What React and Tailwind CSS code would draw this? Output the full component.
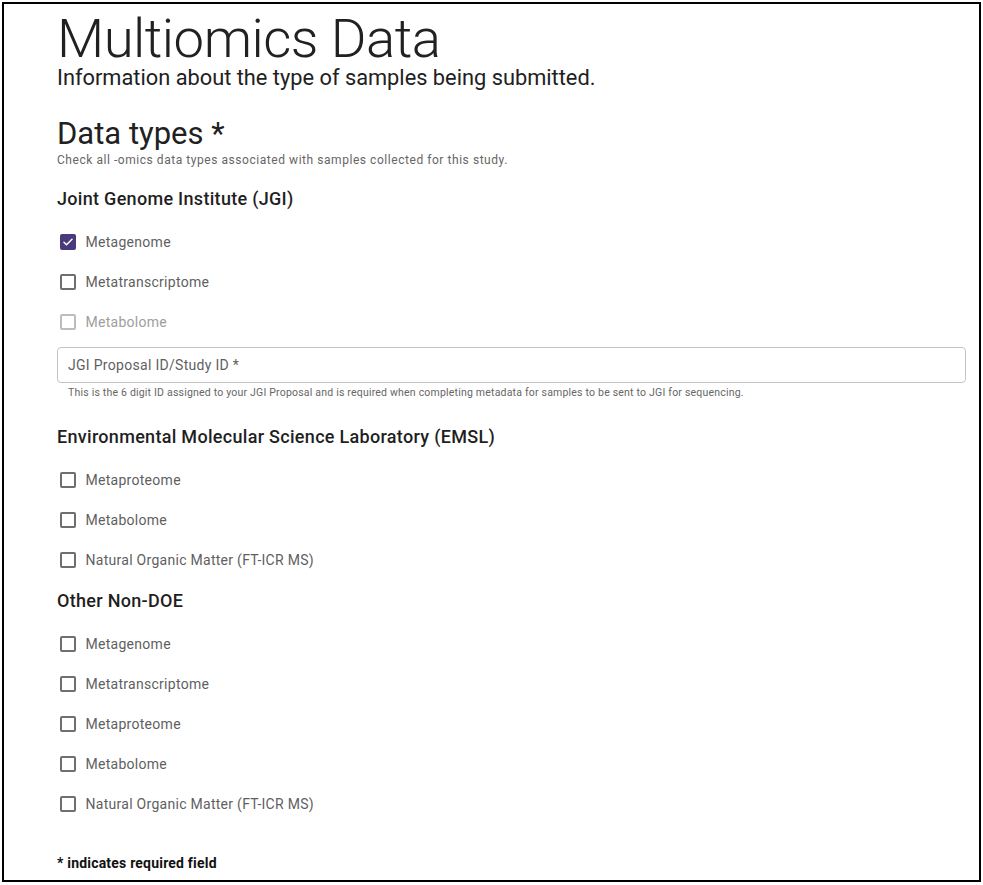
import React from "react";

function Box({ state }) {
  if (state === "checked") {
    return (
      <span className="flex h-[16px] w-[16px] items-center justify-center rounded-[2px] bg-[#4a3a7c]">
        <svg width="12" height="12" viewBox="0 0 24 24" fill="none">
          <path d="M4 12.5l5 5L20 6.5" stroke="white" strokeWidth="3" strokeLinecap="round" strokeLinejoin="round" />
        </svg>
      </span>
    );
  }
  if (state === "disabled") {
    return <span className="block h-[16px] w-[16px] rounded-[2px] border-2 border-[#bdbdbd]" />;
  }
  return <span className="block h-[16px] w-[16px] rounded-[2px] border-2 border-[#6f6f6f]" />;
}

function Row({ label, state }) {
  return (
    <div className="flex h-[40px] items-center pl-[2.5px]">
      <Box state={state} />
      <span
        className={
          "ml-[10px] text-[14px] tracking-[0.28px] " +
          (state === "disabled" ? "text-[#9e9e9e]" : "text-[#5f5f5f]")
        }
      >
        {label}
      </span>
    </div>
  );
}

function Heading({ children, className }) {
  return (
    <div className={"text-[18px] font-medium leading-[24px] text-[#1f1f1f] tracking-[0.3px] " + className}>
      {children}
    </div>
  );
}

export default function App() {
  return (
    <div className="m-[2px] h-[880px] w-[979px] border-2 border-black bg-white pl-[53px] pr-[13px] font-['Roboto',sans-serif]">
      <h1 className="mt-[7px] text-[54.5px] font-light leading-[54px] tracking-[-0.5px] text-[#212121]">
        Multiomics Data
      </h1>
      <div className="mt-[1px] text-[21.8px] leading-[24px] text-[#212121]">
        Information about the type of samples being submitted.
      </div>
      <div className="mt-[26px] text-[31px] leading-[36px] text-[#212121]">Data types *</div>
      <div className="text-[12px] leading-[16px] tracking-[0.55px] text-[#666]">
        Check all -omics data types associated with samples collected for this study.
      </div>

      <Heading className="mt-[19px]">Joint Genome Institute (JGI)</Heading>
      <div className="mt-[11px]">
        <Row label="Metagenome" state="checked" />
        <Row label="Metatranscriptome" />
        <Row label="Metabolome" state="disabled" />
      </div>

      <div className="mt-[5px] flex h-[36px] items-center rounded-[4px] border border-[#c4c4c4] px-[10px]">
        <span className="text-[14px] tracking-[0.3px] text-[#5f5f5f]">JGI Proposal ID/Study ID *</span>
      </div>
      <div className="mt-[3px] pl-[11px] text-[10.5px] leading-[14px] tracking-[0.2px] text-[#666]">
        This is the 6 digit ID assigned to your JGI Proposal and is required when completing metadata for samples to be sent to JGI for sequencing.
      </div>

      <Heading className="mt-[25px]">Environmental Molecular Science Laboratory (EMSL)</Heading>
      <div className="mt-[11px]">
        <Row label="Metaproteome" />
        <Row label="Metabolome" />
        <Row label="Natural Organic Matter (FT-ICR MS)" />
      </div>

      <Heading className="mt-[9px]">Other Non-DOE</Heading>
      <div className="mt-[11px]">
        <Row label="Metagenome" />
        <Row label="Metatranscriptome" />
        <Row label="Metaproteome" />
        <Row label="Metabolome" />
        <Row label="Natural Organic Matter (FT-ICR MS)" />
      </div>

      <div className="mt-[31px] text-[14px] font-bold leading-[16px] tracking-[0.2px] text-[#111]">* indicates required field</div>
    </div>
  );
}
